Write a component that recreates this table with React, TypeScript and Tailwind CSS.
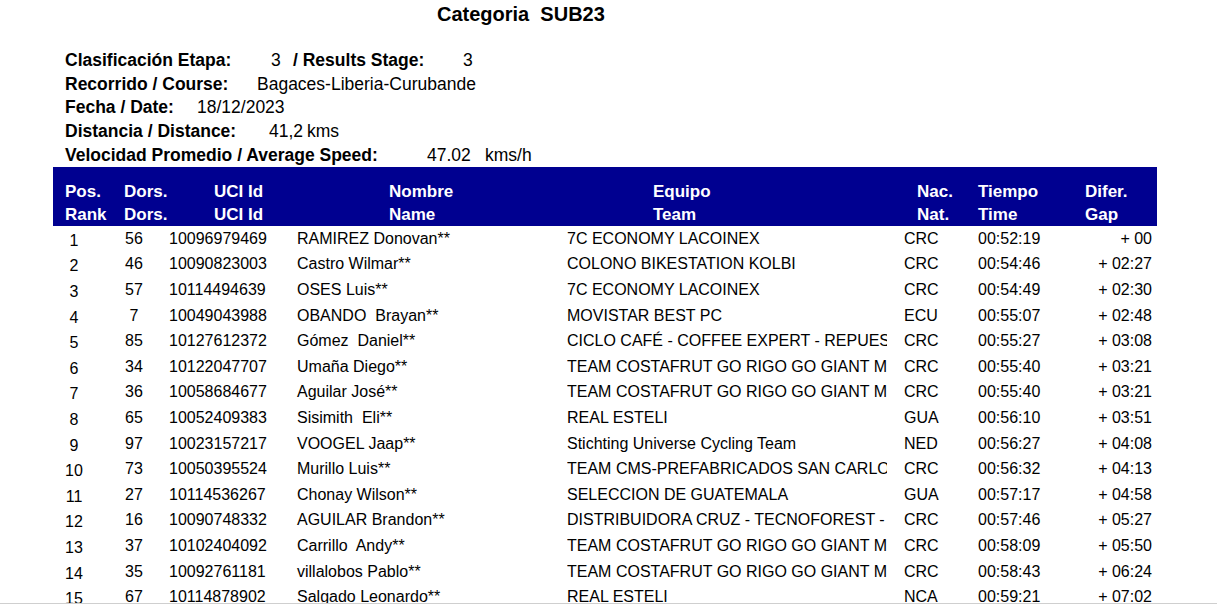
const rows = [
  ['1', '56', '10096979469', 'RAMIREZ Donovan**', '7C ECONOMY LACOINEX', 'CRC', '00:52:19', '+ 00'],
  ['2', '46', '10090823003', 'Castro Wilmar**', 'COLONO BIKESTATION KOLBI', 'CRC', '00:54:46', '+ 02:27'],
  ['3', '57', '10114494639', 'OSES Luis**', '7C ECONOMY LACOINEX', 'CRC', '00:54:49', '+ 02:30'],
  ['4', '7', '10049043988', 'OBANDO  Brayan**', 'MOVISTAR BEST PC', 'ECU', '00:55:07', '+ 02:48'],
  ['5', '85', '10127612372', 'Gómez  Daniel**', 'CICLO CAFÉ - COFFEE EXPERT - REPUES', 'CRC', '00:55:27', '+ 03:08'],
  ['6', '34', '10122047707', 'Umaña Diego**', 'TEAM COSTAFRUT GO RIGO GO GIANT M', 'CRC', '00:55:40', '+ 03:21'],
  ['7', '36', '10058684677', 'Aguilar José**', 'TEAM COSTAFRUT GO RIGO GO GIANT M', 'CRC', '00:55:40', '+ 03:21'],
  ['8', '65', '10052409383', 'Sisimith  Eli**', 'REAL ESTELI', 'GUA', '00:56:10', '+ 03:51'],
  ['9', '97', '10023157217', 'VOOGEL Jaap**', 'Stichting Universe Cycling Team', 'NED', '00:56:27', '+ 04:08'],
  ['10', '73', '10050395524', 'Murillo Luis**', 'TEAM CMS-PREFABRICADOS SAN CARLOS', 'CRC', '00:56:32', '+ 04:13'],
  ['11', '27', '10114536267', 'Chonay Wilson**', 'SELECCION DE GUATEMALA', 'GUA', '00:57:17', '+ 04:58'],
  ['12', '16', '10090748332', 'AGUILAR Brandon**', 'DISTRIBUIDORA CRUZ - TECNOFOREST -', 'CRC', '00:57:46', '+ 05:27'],
  ['13', '37', '10102404092', 'Carrillo  Andy**', 'TEAM COSTAFRUT GO RIGO GO GIANT M', 'CRC', '00:58:09', '+ 05:50'],
  ['14', '35', '10092761181', 'villalobos Pablo**', 'TEAM COSTAFRUT GO RIGO GO GIANT M', 'CRC', '00:58:43', '+ 06:24'],
  ['15', '67', '10114878902', 'Salgado Leonardo**', 'REAL ESTELI', 'NCA', '00:59:21', '+ 07:02'],
]

export default function App() {
  return (
    <div className="h-[605px] w-[1217px] overflow-hidden bg-white text-black font-['Liberation_Sans',Arial,sans-serif] flex flex-col">
      <div className="h-[603px] overflow-hidden">
        {/* Title */}
        <div className="h-[28px] pl-[437px] text-[20px] font-bold leading-[28px] whitespace-pre">Categoria  SUB23</div>

        {/* Stage info */}
        <div className="mt-[20px] pl-[65px] text-[17.5px] leading-[24px]">
          <div className="flex h-[24px] items-center">
            <span className="w-[206px] font-bold">Clasificación Etapa:</span>
            <span className="w-[22px]">3</span>
            <span className="w-[170px] font-bold">/ Results Stage:</span>
            <span>3</span>
          </div>
          <div className="flex h-[23px] items-center">
            <span className="w-[192px] font-bold">Recorrido / Course:</span>
            <span>Bagaces-Liberia-Curubande</span>
          </div>
          <div className="flex h-[24px] items-center">
            <span className="w-[132px] font-bold">Fecha / Date:</span>
            <span>18/12/2023</span>
          </div>
          <div className="flex h-[24px] items-center">
            <span className="w-[204px] font-bold">Distancia / Distance:</span>
            <span className="w-[38px]">41,2</span>
            <span>kms</span>
          </div>
          <div className="flex h-[24px] items-center">
            <span className="w-[362px] font-bold">Velocidad Promedio / Average Speed:</span>
            <span className="w-[58px]">47.02</span>
            <span>kms/h</span>
          </div>
        </div>

        {/* Table header */}
        <div className="ml-[53px] w-[1104px] bg-[#000090] pt-[13px] text-white font-bold text-[17px]">
          {[
            ['Pos.', 'Dors.', 'UCI Id', 'Nombre', 'Equipo', 'Nac.', 'Tiempo', 'Difer.'],
            ['Rank', 'Dors.', 'UCI Id', 'Name', 'Team', 'Nat.', 'Time', 'Gap'],
          ].map((line, i) => (
            <div key={i} className="flex h-[23px] items-center">
              <span className="w-[71px] pl-[12px]">{line[0]}</span>
              <span className="w-[90px]">{line[1]}</span>
              <span className="w-[175px]">{line[2]}</span>
              <span className="w-[264px]">{line[3]}</span>
              <span className="w-[264px]">{line[4]}</span>
              <span className="w-[61px]">{line[5]}</span>
              <span className="w-[107px]">{line[6]}</span>
              <span>{line[7]}</span>
            </div>
          ))}
        </div>

        {/* Rows */}
        <div className="ml-[53px] text-[16px]">
          {rows.map((r) => (
            <div key={r[0]} className="flex h-[25.6px] items-center whitespace-pre">
              <span className="w-[51px] pr-[9px] text-center translate-y-[2px]">{r[0]}</span>
              <span className="w-[60px] text-center">{r[1]}</span>
              <span className="w-[133px] pl-[5px]">{r[2]}</span>
              <span className="w-[270px]">{r[3]}</span>
              <span className="w-[337px]">
                <span className="block w-[320px] overflow-hidden">{r[4]}</span>
              </span>
              <span className="w-[74px]">{r[5]}</span>
              <span className="w-[100px]">{r[6]}</span>
              <span className="w-[74px] text-right">{r[7]}</span>
            </div>
          ))}
        </div>
      </div>
      <div className="h-px bg-[#cfcfcf]" />
    </div>
  )
}
